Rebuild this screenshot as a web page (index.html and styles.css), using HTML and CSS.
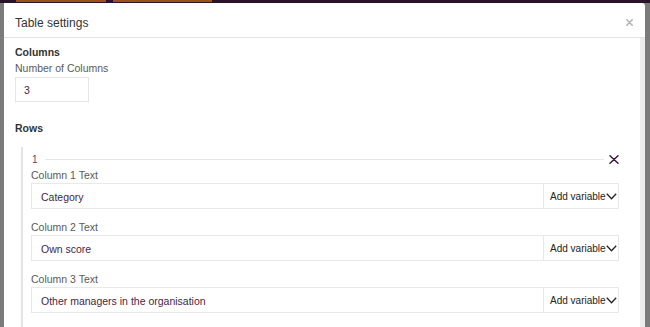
FILE: index.html
```html
<!DOCTYPE html>
<html lang="en">
<head>
    <meta charset="UTF-8">
    <meta name="viewport" content="width=device-width, initial-scale=1.0">
    <title>Table settings</title>

    <link rel="stylesheet" href="styles.css">
</head>
<body>
    <div class="app-nav">
        <span class="nav-tab nav-tab-first"></span>
        <span class="nav-tab nav-tab-second"></span>
    </div>

    <div class="stage">
        <div class="modal">
            <div class="modal-header">
                <h2 class="modal-title">Table settings</h2>
                <button type="button" class="modal-close" aria-label="Close">
                    <svg width="7" height="7" viewBox="0 0 7 7"><path d="M0.8 0.8 L6.2 6.2 M6.2 0.8 L0.8 6.2" stroke="#b4b4b4" stroke-width="1.6" stroke-linecap="round"/></svg>
                </button>
            </div>

            <div class="modal-body">
                <div class="modal-content">
                    <h3 class="section-title">Columns</h3>
                    <label class="field-label" for="columns">Number of Columns</label>
                    <input type="text" id="columns" class="num-input" value="3">

                    <h3 class="section-title rows-title">Rows</h3>
                    <div class="rows">
                        <div class="row-head">
                            <span class="row-num">1</span>
                            <span class="row-rule"></span>
                            <button type="button" class="row-remove" aria-label="Remove row">
                                <svg width="10" height="9" viewBox="0 0 10 9"><path d="M1 0.8 L9 8.2 M9 0.8 L1 8.2" stroke="#3b1836" stroke-width="1.5" stroke-linecap="round"/></svg>
                            </button>
                        </div>

                        <div class="field">
                            <label class="field-label">Column 1 Text</label>
                            <div class="input-group">
                                <input type="text" class="text-input" value="Category">
                                <div class="addon">Add variable<svg width="11" height="7" viewBox="0 0 11 7"><path d="M0.8 0.8 L5.5 5.8 L10.2 0.8" fill="none" stroke="#222" stroke-width="1.3"/></svg></div>
                            </div>
                        </div>

                        <div class="field">
                            <label class="field-label">Column 2 Text</label>
                            <div class="input-group">
                                <input type="text" class="text-input" value="Own score">
                                <div class="addon">Add variable<svg width="11" height="7" viewBox="0 0 11 7"><path d="M0.8 0.8 L5.5 5.8 L10.2 0.8" fill="none" stroke="#222" stroke-width="1.3"/></svg></div>
                            </div>
                        </div>

                        <div class="field">
                            <label class="field-label">Column 3 Text</label>
                            <div class="input-group">
                                <input type="text" class="text-input" value="Other managers in the organisation">
                                <div class="addon">Add variable<svg width="11" height="7" viewBox="0 0 11 7"><path d="M0.8 0.8 L5.5 5.8 L10.2 0.8" fill="none" stroke="#222" stroke-width="1.3"/></svg></div>
                            </div>
                        </div>
                    </div>
                </div>
                <div class="scroll-track"></div>
            </div>
        </div>
    </div>
</body>
</html>
```

FILE: styles.css
```css
html,
body {
    height: 100%;
}

body {
    display: flex;
    flex-direction: column;
    margin: 0;
    overflow: hidden;
    font-family: "Liberation Sans", Arial, sans-serif;
    background-color: #7b7b7b;
}

.app-nav {
    display: flex;
    flex-shrink: 0;
    height: 3px;
    padding-left: 16px;
    background-color: #2a1427;
}

.nav-tab {
    height: 2px;
    background-color: #9c5219;
}

.nav-tab-first {
    width: 90px;
    margin-right: 7px;
}

.nav-tab-second {
    width: 99px;
}

.stage {
    display: flex;
    flex: 1;
    min-height: 0;
    padding: 0 5px 0 4px;
}

.modal {
    display: flex;
    flex-direction: column;
    flex: 1;
    min-height: 0;
    background-color: #FFFFFF;
    border-radius: 0 3px 0 0;
}

.modal-header {
    display: flex;
    align-items: center;
    justify-content: space-between;
    padding: 12px 12px 6px 11px;
    border-bottom: 1px solid #e2e2e2;
}

.modal-title {
    margin: 0;
    font-size: 12px;
    line-height: 16px;
    font-weight: normal;
    color: #333333;
}

.modal-close,
.row-remove {
    display: flex;
    padding: 0;
    border: none;
    background: none;
    cursor: pointer;
}

.modal-close {
    margin-top: -2px;
}

.modal-body {
    display: flex;
    flex: 1;
    min-height: 0;
    overflow: hidden;
}

.modal-content {
    flex: 1;
    padding: 7px 21px 0 11px;
}

.scroll-track {
    width: 5px;
    background-color: #ececec;
}

.section-title {
    margin: 0 0 2px;
    font-size: 10.5px;
    line-height: 14px;
    font-weight: bold;
    color: #333333;
}

.rows-title {
    margin-top: 19px;
    margin-bottom: 12px;
}

.field-label {
    display: block;
    margin-bottom: 2px;
    font-size: 10.5px;
    line-height: 14px;
    color: #5a5a5a;
}

.num-input {
    display: block;
    box-sizing: border-box;
    width: 74px;
    height: 25px;
    margin: 0;
    padding: 0 8px;
    border: 1px solid #e6e6e6;
    border-radius: 0;
    font-family: inherit;
    font-size: 10.5px;
    color: #4a2542;
    outline: none;
}

.rows {
    margin-left: 6px;
    padding-left: 8px;
    padding-bottom: 20px;
    border-left: 2px solid #e4e4e4;
}

.row-head {
    display: flex;
    align-items: center;
    height: 14px;
    padding-top: 5px;
    margin-bottom: 2px;
}

.row-num {
    padding-left: 1px;
    font-size: 10px;
    color: #6b3f60;
}

.row-rule {
    flex: 1;
    height: 1px;
    margin: 0 5px 0 7px;
    background-color: #e6e6e6;
}

.field .field-label {
    margin-bottom: 1px;
}

.field {
    margin-bottom: 11px;
}

.input-group {
    display: flex;
    height: 26px;
    box-sizing: border-box;
    border: 1px solid #e8e8e8;
}

.text-input {
    flex: 1;
    min-width: 0;
    margin: 0;
    padding: 1px 9px 0;
    border: none;
    font-family: inherit;
    font-size: 10.5px;
    color: #4a2542;
    outline: none;
}

.addon {
    display: flex;
    align-items: center;
    width: 75px;
    box-sizing: border-box;
    padding: 1px 0 0 6px;
    border-left: 1px solid #e8e8e8;
    font-size: 10px;
    color: #222222;
}
```
